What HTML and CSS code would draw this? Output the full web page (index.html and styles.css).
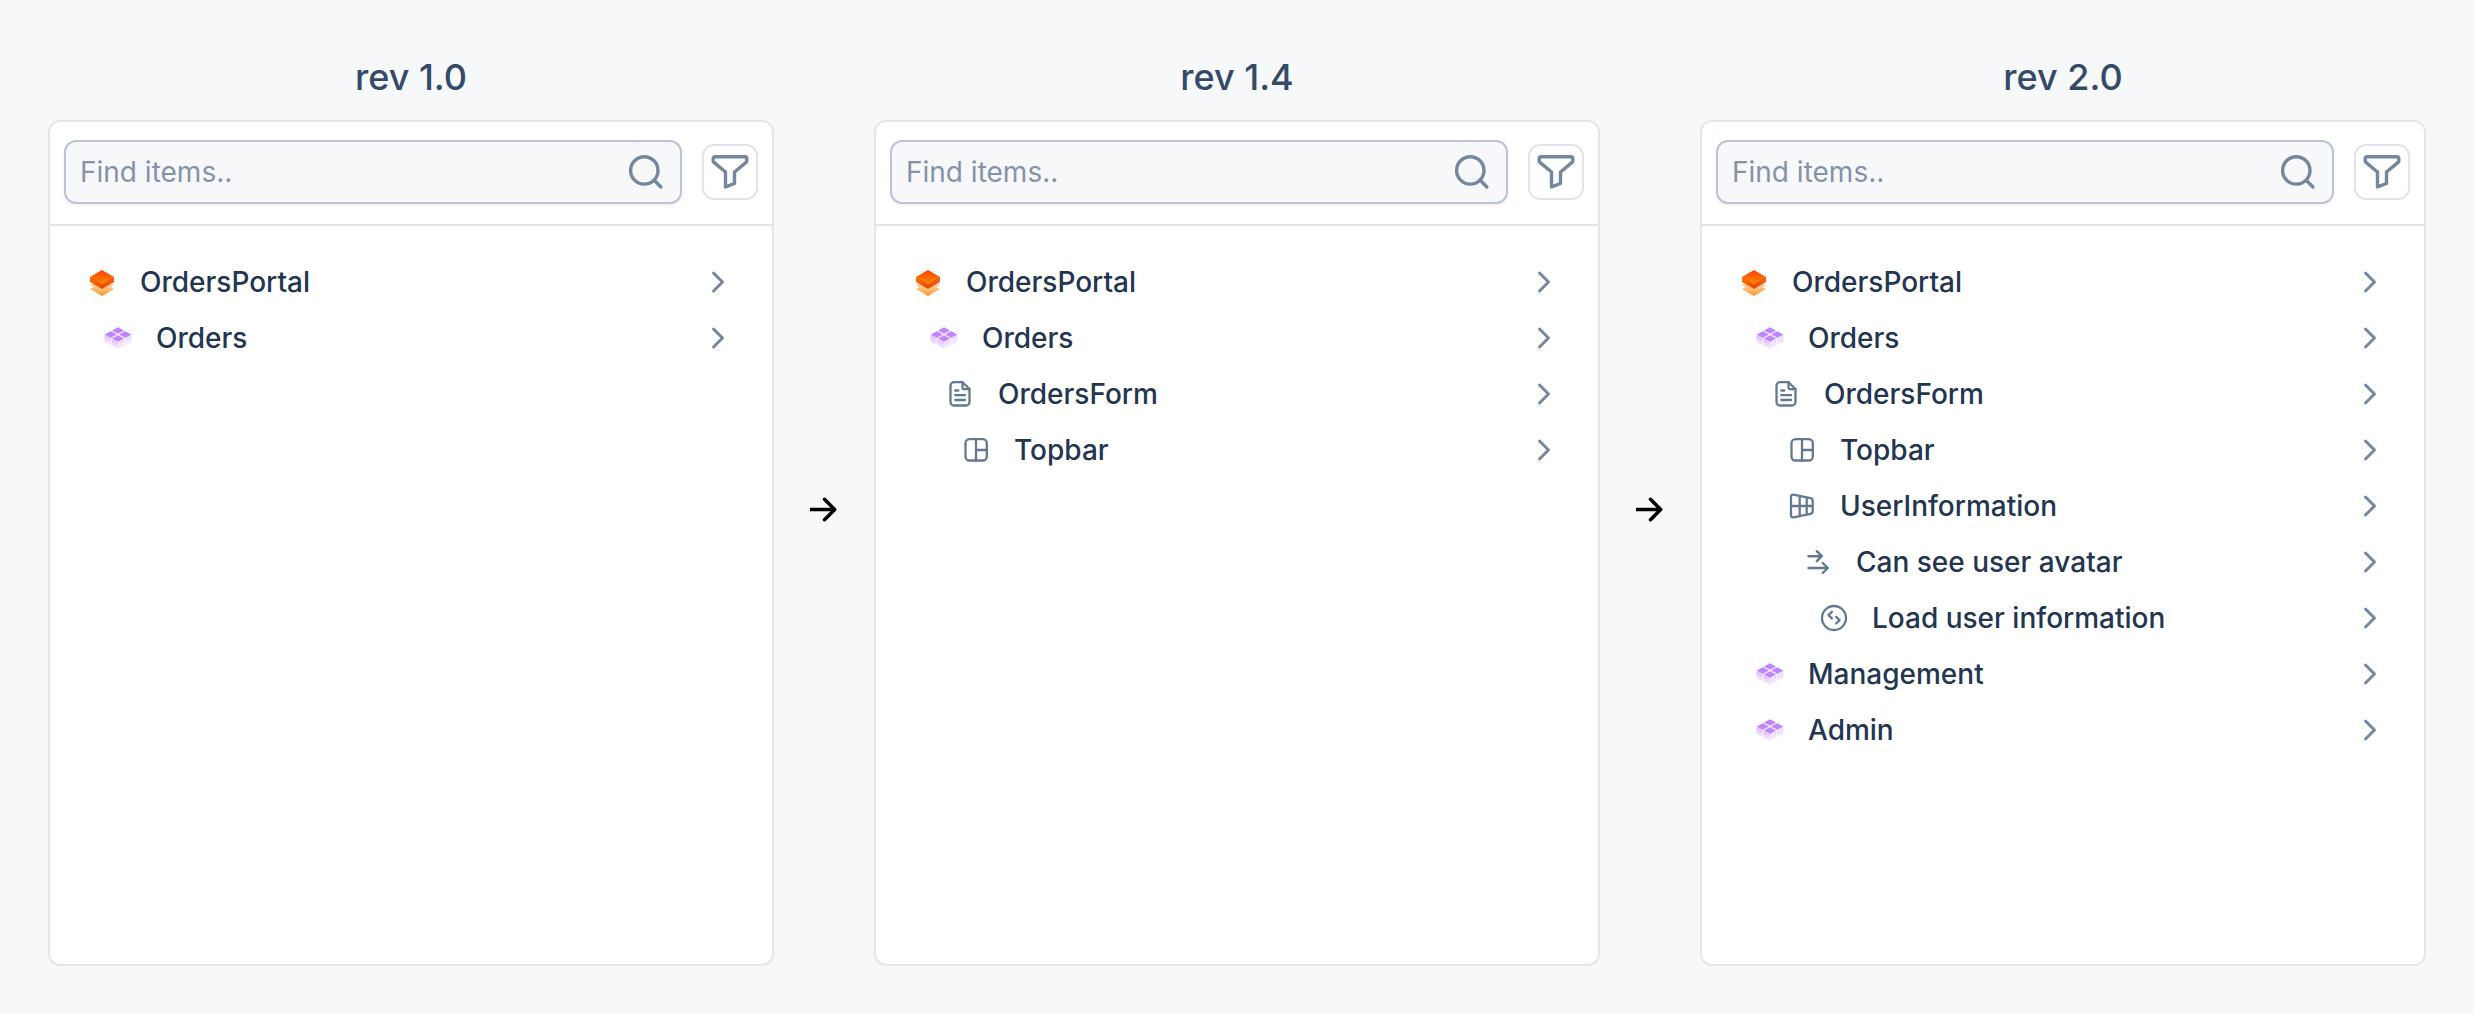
FILE: index.html
```html
<!DOCTYPE html>
<html lang="en">
<head>
<meta charset="utf-8">
<title>Revisions</title>
<link rel="stylesheet" href="styles.css">
</head>
<body>
<svg class="sprite" aria-hidden="true">
  <defs>
    <linearGradient id="g-top" x1="0" y1="0" x2="0" y2="1"><stop offset="0" stop-color="#ff4000"/><stop offset="1" stop-color="#ff8a00"/></linearGradient>
    <linearGradient id="g-left" x1="0" y1="0" x2="1" y2="0"><stop offset="0" stop-color="#ff7000"/><stop offset="1" stop-color="#e84a00"/></linearGradient>
    <linearGradient id="g-right" x1="0" y1="0" x2="1" y2="0"><stop offset="0" stop-color="#e64a00"/><stop offset="1" stop-color="#f5601a"/></linearGradient>
    <linearGradient id="g-mid" x1="0" y1="0" x2="0" y2="1"><stop offset="0" stop-color="#ffe0c8"/><stop offset="1" stop-color="#ffb870"/></linearGradient>
    <linearGradient id="g-low" x1="0" y1="0" x2="0" y2="1"><stop offset="0" stop-color="#ffe2c8"/><stop offset="1" stop-color="#ff9420"/></linearGradient>
    <linearGradient id="g-side" x1="0" y1="0" x2="0" y2="1"><stop offset="0" stop-color="#dcbcff"/><stop offset="1" stop-color="#f7efff"/></linearGradient>
    <linearGradient id="g-side2" x1="0" y1="0" x2="0" y2="1"><stop offset="0" stop-color="#ead8ff"/><stop offset="1" stop-color="#f7efff"/></linearGradient>
  </defs>
  <symbol id="i-app" viewBox="0 0 32 32">
    <path d="M4 23 16 16l12 7-12 7z" fill="url(#g-low)"/>
    <path d="M4 19 16 12l12 7-12 7z" fill="url(#g-mid)"/>
    <path d="M4 10.500 16 17.500V23L4 16z" fill="url(#g-left)"/>
    <path d="M28 10.500 16 17.500V23l12-7z" fill="url(#g-right)"/>
    <path d="M4 11 16 4l12 7-12 7.500z" fill="url(#g-top)"/>
  </symbol>
  <symbol id="i-module" viewBox="0 0 32 32">
    <path d="M2.500 12.500 9 15.500v8l-6.500-3.500z" fill="url(#g-side)"/>
    <path d="M29.500 12.500 23 15.500v8l6.500-3.500z" fill="url(#g-side2)"/>
    <path d="M9.600 16.500 16 20v7l-6.400-3.500z" fill="url(#g-side)"/>
    <path d="M22.400 16.500 16 20v7l6.400-3.500z" fill="url(#g-side2)"/>
    <path d="M16 6 28 12.500 16 19.500 4 12.500z" fill="#f0e2ff"/>
    <path d="M16 5.200 22 8.400 16 11.600l-6-3.200zM8.700 9.300l6 3.200-6 3.200-6-3.200zM23.300 9.300l6 3.200-6 3.200-6-3.200zM16 13.400l6 3.200L16 19.800l-6-3.200z" fill="#c084fc"/>
  </symbol>
  <symbol id="i-page" viewBox="0 0 32 32">
    <g stroke-width="2.300"><path d="M18.500 4.200H10a3.500 3.500 0 0 0-3.500 3.500v16.300a3.500 3.500 0 0 0 3.500 3.500h12a3.500 3.500 0 0 0 3.500-3.500V11z"/>
    <path d="M18.500 4.200v5a2 2 0 0 0 2 2h5M11.300 12.500h3M11.300 17.200h9.700M11.300 22h9.700"/></g>
  </symbol>
  <symbol id="i-layout" viewBox="0 0 32 32">
    <g stroke-width="2.300"><rect x="5.500" y="5.200" width="21.300" height="21.300" rx="4"/><path d="M16 5v21.500M16 16h11"/></g>
  </symbol>
  <symbol id="i-grid" viewBox="0 0 32 32">
    <path stroke-width="2.300" d="M7.500 4.600 24.500 8.200Q26.700 8.700 26.700 11v10q0 2.300-2.200 2.800L7.500 27.300Q5 27.600 5 25V7q0-2.600 2.500-2.400zM5 16h21.500M13.700 6v20M20.700 7.500v17"/>
  </symbol>
  <symbol id="i-flow" viewBox="0 0 32 32">
    <path stroke-width="2.400" d="M6.500 10.200h13M14.800 5.200l5 5-5 5M6.500 22h19M20.800 17l5 5-5 5"/>
  </symbol>
  <symbol id="i-action" viewBox="0 0 32 32">
    <g stroke-width="2.300"><circle cx="16" cy="16" r="12"/><path d="M13.900 9.800l-3.400 3.300 3.400 3.300M18.200 14.900l3.400 3.300-3.400 3.300"/></g>
  </symbol>
  <symbol id="i-chevron" viewBox="0 0 32 32"><path d="M9.500 7l9 9-9 9"/></symbol>
  <symbol id="i-search" viewBox="0 0 40 40"><g stroke-width="3.400"><circle cx="18.300" cy="18.400" r="13.700"/><path d="M28.200 28.300l6.700 6.700"/></g></symbol>
  <symbol id="i-filter" viewBox="0 0 40 40"><path stroke-width="3.400" d="M5 4.700h30a1.800 1.800 0 0 1 1.800 1.800v2.400a2 2 0 0 1-.7 1.500L24.500 20v11.500L15.500 34.800V20L3.900 10.400a2 2 0 0 1-.7-1.500V6.500A1.800 1.800 0 0 1 5 4.700z"/></symbol>
  <symbol id="i-arrow" viewBox="0 0 32 32"><g stroke-width="3.500"><path d="M2 18.500h25"/><path d="M16.500 8.300l10.200 10.200-10.200 10.200" stroke-linecap="round"/></g></symbol>
</svg>

<main class="board">
  <section class="revision">
    <h2 class="title">rev 1.0</h2>
    <div class="panel">
      <div class="toolbar">
        <label class="search"><input class="search-input" type="text" placeholder="Find items.." aria-label="Find items"><svg class="tool-icon"><use href="#i-search"/></svg></label>
        <button class="filter" type="button" aria-label="Filter"><svg class="tool-icon"><use href="#i-filter"/></svg></button>
      </div>
      <ul class="tree">
        <li><button class="row" type="button"><svg class="icon"><use href="#i-app"/></svg><span class="name">OrdersPortal</span><svg class="chevron"><use href="#i-chevron"/></svg></button></li>
        <li><button class="row level-1" type="button"><svg class="icon"><use href="#i-module"/></svg><span class="name">Orders</span><svg class="chevron"><use href="#i-chevron"/></svg></button></li>
      </ul>
    </div>
  </section>
  <svg class="arrow" aria-hidden="true"><use href="#i-arrow"/></svg>
  <section class="revision">
    <h2 class="title">rev 1.4</h2>
    <div class="panel">
      <div class="toolbar">
        <label class="search"><input class="search-input" type="text" placeholder="Find items.." aria-label="Find items"><svg class="tool-icon"><use href="#i-search"/></svg></label>
        <button class="filter" type="button" aria-label="Filter"><svg class="tool-icon"><use href="#i-filter"/></svg></button>
      </div>
      <ul class="tree">
        <li><button class="row" type="button"><svg class="icon"><use href="#i-app"/></svg><span class="name">OrdersPortal</span><svg class="chevron"><use href="#i-chevron"/></svg></button></li>
        <li><button class="row level-1" type="button"><svg class="icon"><use href="#i-module"/></svg><span class="name">Orders</span><svg class="chevron"><use href="#i-chevron"/></svg></button></li>
        <li><button class="row level-2" type="button"><svg class="icon line"><use href="#i-page"/></svg><span class="name">OrdersForm</span><svg class="chevron"><use href="#i-chevron"/></svg></button></li>
        <li><button class="row level-3" type="button"><svg class="icon line"><use href="#i-layout"/></svg><span class="name">Topbar</span><svg class="chevron"><use href="#i-chevron"/></svg></button></li>
      </ul>
    </div>
  </section>
  <svg class="arrow" aria-hidden="true"><use href="#i-arrow"/></svg>
  <section class="revision">
    <h2 class="title">rev 2.0</h2>
    <div class="panel">
      <div class="toolbar">
        <label class="search"><input class="search-input" type="text" placeholder="Find items.." aria-label="Find items"><svg class="tool-icon"><use href="#i-search"/></svg></label>
        <button class="filter" type="button" aria-label="Filter"><svg class="tool-icon"><use href="#i-filter"/></svg></button>
      </div>
      <ul class="tree">
        <li><button class="row" type="button"><svg class="icon"><use href="#i-app"/></svg><span class="name">OrdersPortal</span><svg class="chevron"><use href="#i-chevron"/></svg></button></li>
        <li><button class="row level-1" type="button"><svg class="icon"><use href="#i-module"/></svg><span class="name">Orders</span><svg class="chevron"><use href="#i-chevron"/></svg></button></li>
        <li><button class="row level-2" type="button"><svg class="icon line"><use href="#i-page"/></svg><span class="name">OrdersForm</span><svg class="chevron"><use href="#i-chevron"/></svg></button></li>
        <li><button class="row level-3" type="button"><svg class="icon line"><use href="#i-layout"/></svg><span class="name">Topbar</span><svg class="chevron"><use href="#i-chevron"/></svg></button></li>
        <li><button class="row level-3" type="button"><svg class="icon line"><use href="#i-grid"/></svg><span class="name">UserInformation</span><svg class="chevron"><use href="#i-chevron"/></svg></button></li>
        <li><button class="row level-4" type="button"><svg class="icon line"><use href="#i-flow"/></svg><span class="name">Can see user avatar</span><svg class="chevron"><use href="#i-chevron"/></svg></button></li>
        <li><button class="row level-5" type="button"><svg class="icon line"><use href="#i-action"/></svg><span class="name">Load user information</span><svg class="chevron"><use href="#i-chevron"/></svg></button></li>
        <li><button class="row level-1" type="button"><svg class="icon"><use href="#i-module"/></svg><span class="name">Management</span><svg class="chevron"><use href="#i-chevron"/></svg></button></li>
        <li><button class="row level-1" type="button"><svg class="icon"><use href="#i-module"/></svg><span class="name">Admin</span><svg class="chevron"><use href="#i-chevron"/></svg></button></li>
      </ul>
    </div>
  </section>
</main>
</body>
</html>
```

FILE: styles.css
```css
* { box-sizing: border-box; }

body {
  margin: 0;
  background: #f7f8fa;
  color: #233550;
  font-family: Inter, "Liberation Sans", sans-serif;
  font-size: 28px;
}

button, input { font: inherit; color: inherit; }

.sprite { position: absolute; width: 0; height: 0; }

.board {
  display: flex;
  min-height: 100vh;
  padding: 48px;
}

.revision {
  flex: 1;
  min-width: 0;
  display: flex;
  flex-direction: column;
}

.title {
  margin: 0 0 14px;
  line-height: 58px;
  font-size: 36px;
  font-weight: 500;
  text-align: center;
  color: #334b68;
}

.panel {
  flex: 1;
  background: #fff;
  border: 2px solid #e5e6e8;
  border-radius: 12px;
}

.toolbar {
  display: flex;
  align-items: center;
  gap: 20px;
  padding: 18px 14px 20px;
  border-bottom: 2px solid #e0e5ea;
}

.search {
  flex: 1;
  min-width: 0;
  display: flex;
  align-items: center;
  height: 64px;
  padding: 0 14px;
  background: #f7f8fa;
  border: 2px solid #bbc4d4;
  border-radius: 12px;
  box-shadow: 0 2px 4px rgba(15, 23, 42, 0.05);
}

.search-input {
  flex: 1;
  min-width: 0;
  padding: 0;
  border: 0;
  outline: 0;
  background: none;
}

.search-input::placeholder { color: #8593a8; opacity: 1; }

.filter {
  display: flex;
  align-items: center;
  justify-content: center;
  width: 56px;
  height: 56px;
  padding: 0;
  background: #fff;
  border: 2px solid #e0e5ea;
  border-radius: 12px;
}

.tool-icon {
  flex: none;
  width: 40px;
  height: 40px;
  fill: none;
  stroke: #75879f;
  stroke-linecap: round;
  stroke-linejoin: round;
}

.tree {
  margin: 0;
  padding: 28px 36px;
  list-style: none;
}

.row {
  display: flex;
  align-items: center;
  gap: 22px;
  width: 100%;
  height: 56px;
  padding: 0;
  border: 0;
  background: none;
  text-align: left;
  font-weight: 500;
}

.level-1 { padding-left: 16px; }
.level-2 { padding-left: 32px; }
.level-3 { padding-left: 48px; }
.level-4 { padding-left: 64px; }
.level-5 { padding-left: 80px; }

.icon, .chevron {
  flex: none;
  width: 32px;
  height: 32px;
}

.line {
  fill: none;
  stroke: #64798f;
  stroke-linecap: round;
  stroke-linejoin: round;
}

.name { flex: 1; }

.chevron {
  fill: none;
  stroke: #75879f;
  stroke-width: 3;
  stroke-linecap: round;
  stroke-linejoin: round;
}

.arrow {
  flex: none;
  align-self: center;
  width: 32px;
  height: 32px;
  margin: 0 34px;
  fill: none;
  stroke: #000;
  stroke-linejoin: round;
}
```
